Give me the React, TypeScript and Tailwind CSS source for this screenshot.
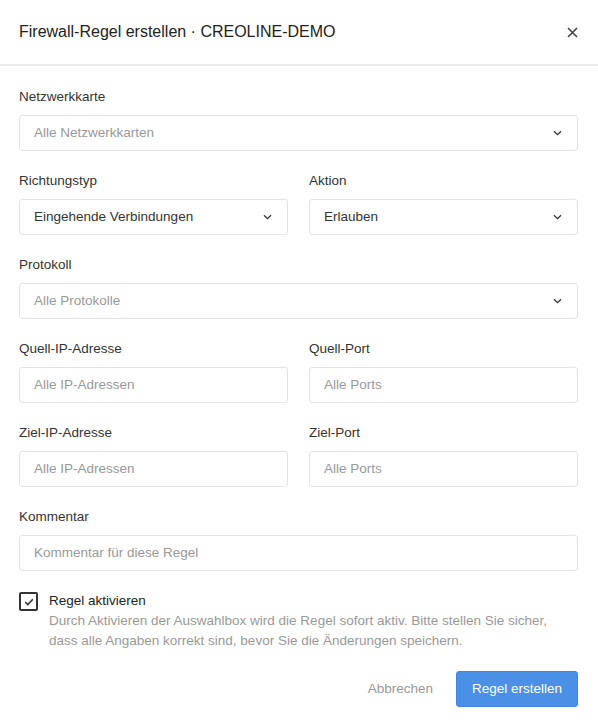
import React from "react";

const font = { fontFamily: '"Liberation Sans", Arial, sans-serif' };

function Chevron() {
  return (
    <svg width="9" height="6" viewBox="0 0 9 6" fill="none" className="shrink-0">
      <path d="M1 1.2 L4.5 4.6 L8 1.2" stroke="#333" strokeWidth="1.3" />
    </svg>
  );
}

function Label({ children }: { children: React.ReactNode }) {
  return <div className="text-[13.5px] leading-[20px] text-[#333] mb-[8px]">{children}</div>;
}

function Select({ value, placeholder }: { value?: string; placeholder?: string }) {
  return (
    <div className="h-[36px] border border-[#e3e3e3] rounded-[3px] flex items-center justify-between pl-[14px] pr-[15px] bg-white">
      <span className={"text-[13.5px] " + (value ? "text-[#333]" : "text-[#999]")}>{value ?? placeholder}</span>
      <Chevron />
    </div>
  );
}

function Input({ placeholder }: { placeholder: string }) {
  return (
    <div className="h-[36px] border border-[#e3e3e3] rounded-[3px] flex items-center pl-[14px] bg-white">
      <span className="text-[13.5px] text-[#999]">{placeholder}</span>
    </div>
  );
}

export default function App() {
  return (
    <div className="w-[598px] h-[725px] bg-white" style={font}>
      <div className="h-[66px] border-b-2 border-[#ebebeb] flex items-center justify-between pl-[19px] pr-[20px]">
        <span className="text-[16px] text-[#222]">Firewall-Regel erstellen · CREOLINE-DEMO</span>
        <svg width="11" height="11" viewBox="0 0 11 11">
          <path d="M1 1 L10 10 M10 1 L1 10" stroke="#444" strokeWidth="1.6" />
        </svg>
      </div>
      <div className="pl-[19px] pr-[20px] pt-[21px] flex flex-col gap-[20px]">
        <div>
          <Label>Netzwerkkarte</Label>
          <Select placeholder="Alle Netzwerkkarten" />
        </div>
        <div className="grid grid-cols-2 gap-x-[21px]">
          <div>
            <Label>Richtungstyp</Label>
            <Select value="Eingehende Verbindungen" />
          </div>
          <div>
            <Label>Aktion</Label>
            <Select value="Erlauben" />
          </div>
        </div>
        <div>
          <Label>Protokoll</Label>
          <Select placeholder="Alle Protokolle" />
        </div>
        <div className="grid grid-cols-2 gap-x-[21px]">
          <div>
            <Label>Quell-IP-Adresse</Label>
            <Input placeholder="Alle IP-Adressen" />
          </div>
          <div>
            <Label>Quell-Port</Label>
            <Input placeholder="Alle Ports" />
          </div>
        </div>
        <div className="grid grid-cols-2 gap-x-[21px]">
          <div>
            <Label>Ziel-IP-Adresse</Label>
            <Input placeholder="Alle IP-Adressen" />
          </div>
          <div>
            <Label>Ziel-Port</Label>
            <Input placeholder="Alle Ports" />
          </div>
        </div>
        <div>
          <Label>Kommentar</Label>
          <Input placeholder="Kommentar für diese Regel" />
        </div>
        <div className="flex gap-[11px]">
          <div className="w-[19px] h-[19px] border-2 border-[#333] rounded-[2px] flex items-center justify-center shrink-0 mt-[1px]">
            <svg width="10" height="8" viewBox="0 0 10 8" fill="none">
              <path d="M1.2 4 L3.8 6.5 L8.8 1.2" stroke="#333" strokeWidth="1.6" />
            </svg>
          </div>
          <div>
            <div className="text-[13.5px] leading-[20px] text-[#222]">Regel aktivieren</div>
            <div className="text-[13.5px] leading-[20px] text-[#999]">
              Durch Aktivieren der Auswahlbox wird die Regel sofort aktiv. Bitte stellen Sie sicher, dass alle Angaben korrekt sind, bevor Sie die Änderungen speichern.
            </div>
          </div>
        </div>
        <div className="flex justify-end items-center gap-[23px]">
          <span className="text-[13.5px] text-[#999]">Abbrechen</span>
          <div className="h-[36px] px-[15px] rounded-[3px] bg-[#4a90e6] border border-[#3f86df] flex items-center text-white text-[13.5px]">
            Regel erstellen
          </div>
        </div>
      </div>
    </div>
  );
}
